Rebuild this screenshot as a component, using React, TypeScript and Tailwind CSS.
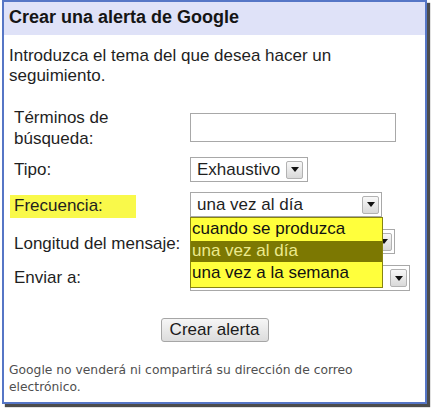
import React from 'react';

function ArrowButton() {
  return (
    <span className="flex h-[18px] w-[17px] items-center justify-center rounded-[2px] border border-[#b2b2b2] bg-linear-to-b from-[#f8f8f8] to-[#d9d9d9]">
      <svg width="8" height="5" viewBox="0 0 8 5">
        <path d="M0 0h8L4 5z" fill="#111" />
      </svg>
    </span>
  );
}

export default function App() {
  return (
    <div className="min-h-screen bg-white pl-[2px]">
      <div className="w-[425px] h-[404px] border-2 border-[#5676c6] bg-white shadow-[3px_3px_1px_#4c4c4c] text-[17px] leading-[21px] text-[#1f1f1f] font-['Liberation_Sans',Arial,sans-serif]">
        {/* Header */}
        <div className="h-[33px] bg-[#dfe2f8] pl-[5px] pt-[5px] text-[18px] font-bold text-[#151515]">
          Crear una alerta de Google
        </div>

        <p className="px-[5px] pt-[11px] leading-[20px]">
          Introduzca el tema del que desea hacer un
          <br />
          seguimiento.
        </p>

        <div className="pl-[10px] mt-[21px]">
          {/* Términos de búsqueda */}
          <div className="flex items-start">
            <div className="w-[176px]">
              Términos de
              <br />
              búsqueda:
            </div>
            <div className="mt-[6px] h-[29px] w-[206px] border border-[#a8a8a8] bg-white" />
          </div>

          {/* Tipo */}
          <div className="mt-[8px] flex items-center">
            <div className="w-[176px]">Tipo:</div>
            <div className="flex h-[25px] w-[118px] items-center justify-between border border-[#a8a8a8] bg-white pl-[6px] pr-[4px]">
              <span>Exhaustivo</span>
              <ArrowButton />
            </div>
          </div>

          {/* Frecuencia */}
          <div className="mt-[10px] flex items-start">
            <div className="w-[176px]">
              <div className="-ml-[4px] mt-[3px] h-[23px] w-[126px] bg-[#f9f94a] pl-[4px]">Frecuencia:</div>
            </div>
            <div className="relative">
              <div className="flex h-[25px] w-[192px] items-center justify-between border border-[#a8a8a8] bg-white pl-[6px] pr-[2px]">
                <span>una vez al día</span>
                <ArrowButton />
              </div>
              {/* open dropdown list */}
              <div className="absolute left-0 top-full z-10 w-[193px] border border-[#878410] bg-[#ffff3c]">
                <div className="h-[23px] pl-[1px] leading-[22px] text-[#111]">cuando se produzca</div>
                <div className="h-[21px] bg-[#7c7802] pl-[1px] leading-[20px] text-[#ecea8c]">una vez al día</div>
                <div className="h-[25px] pl-[1px] leading-[22px] text-[#111]">una vez a la semana</div>
              </div>
            </div>
          </div>

          {/* Longitud del mensaje (value hidden under the open list) */}
          <div className="mt-[11px] flex items-start">
            <div className="mt-[4px] w-[176px]">Longitud del mensaje:</div>
            <div className="flex h-[25px] w-[205px] items-center justify-end border border-[#a8a8a8] bg-white pr-[2px]">
              <ArrowButton />
            </div>
          </div>

          {/* Enviar a (value hidden under the open list) */}
          <div className="mt-[11px] flex items-start">
            <div className="mt-[2px] w-[176px]">Enviar a:</div>
            <div className="flex h-[26px] w-[220px] items-center justify-end border border-[#a8a8a8] bg-white pr-[2px]">
              <ArrowButton />
            </div>
          </div>
        </div>

        <div className="mt-[27px] flex justify-center">
          <button className="h-[24px] w-[108px] rounded-[3px] border border-[#a6a6a6] bg-linear-to-b from-[#f6f6f6] to-[#dcdcdc] text-[17px] leading-[20px] text-[#1a1a1a]">
            Crear alerta
          </button>
        </div>

        <p className="mt-[20px] px-[5px] font-['DejaVu_Sans',Verdana,sans-serif] text-[12.3px] leading-[17px] text-[#4f4f4f]">
          Google no venderá ni compartirá su dirección de correo
          <br />
          electrónico.
        </p>
      </div>
    </div>
  );
}
